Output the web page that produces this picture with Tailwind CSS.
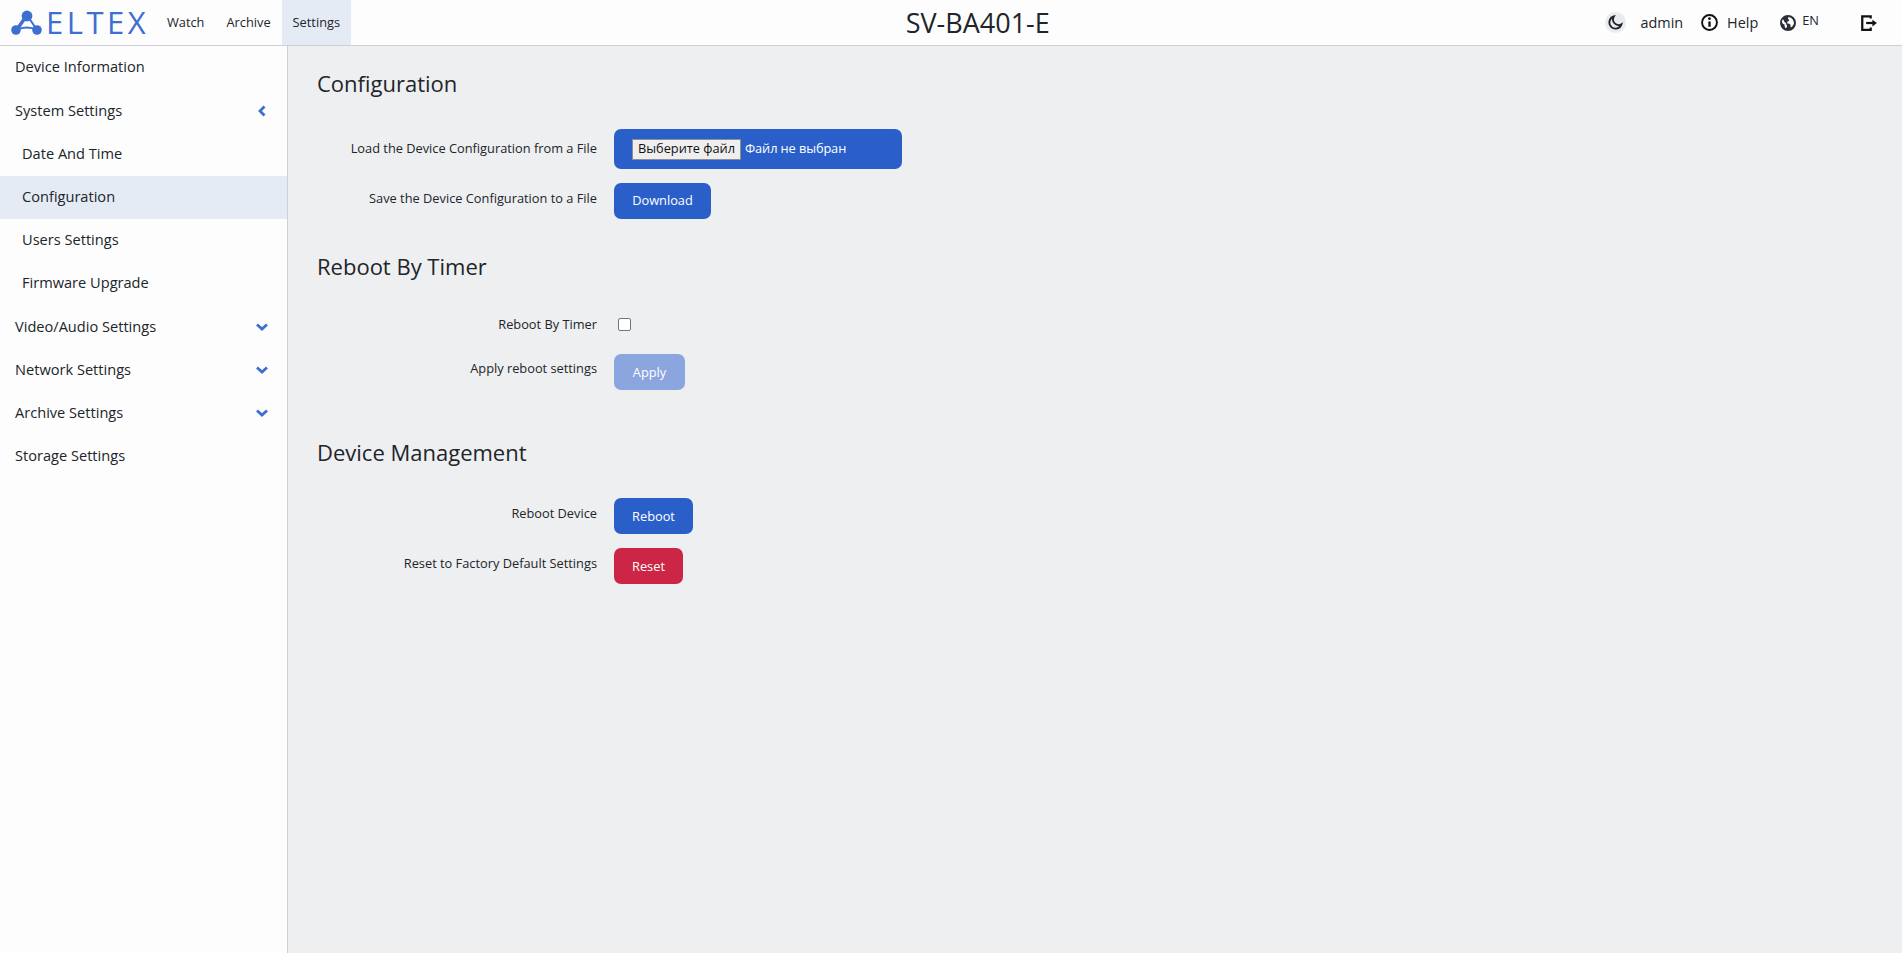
<!DOCTYPE html>
<html lang="en">
<head>
    <meta charset="UTF-8">
    <title>SV-BA401-E</title>
    <script src="https://cdn.jsdelivr.net/npm/@tailwindcss/browser@4"></script>
</head>
<body class="h-[953px] overflow-hidden bg-[#eeeff1] font-['Open_Sans',sans-serif] text-[#212529]">
    <!-- Top bar -->
    <header class="flex h-[46px] items-stretch border-b border-[#ced0d6] bg-[#fdfdfd]">
        <a class="ml-[10px] flex w-[146px] items-center">
            <svg class="h-[26px] w-[33px] shrink-0" viewBox="0 0 33 26" fill="none">
                <path d="M15 8 L6 20 M19 8 L27 20 M6 20 Q17 15 27 20" stroke="#3d6fd0" stroke-width="2"/>
                <path d="M15 8 L8 18" stroke="#3d6fd0" stroke-width="3.4"/>
                <circle cx="17" cy="6" r="5.4" fill="#3d6fd0"/>
                <circle cx="6" cy="20" r="4.8" fill="#3d6fd0"/>
                <circle cx="27" cy="20" r="4.8" fill="#3d6fd0"/>
            </svg>
            <span class="ml-[3px] text-[31px] leading-none tracking-[3.5px] text-[#3d6fd0]">ELTEX</span>
        </a>
        <nav class="flex text-[12.8px]">
            <a class="flex items-center px-[11px]">Watch</a>
            <a class="flex items-center px-[11px]">Archive</a>
            <a class="flex items-center bg-[#e5ebf5] px-[11px]">Settings</a>
        </nav>
        <div class="flex flex-1 items-center justify-center">
            <span class="text-[27px] leading-none">SV-BA401-E</span>
        </div>
        <div class="flex items-center pr-[24px] text-[14px]">
            <span class="flex h-[21px] w-[21px] items-center justify-center rounded-full bg-[#e9ebee]">
                <svg class="h-[15px] w-[15px]" viewBox="0 0 16 16" fill="none" stroke="#212529" stroke-width="2"><path d="M6.2 1.6a6.6 6.6 0 1 0 8.2 8.2 A6 6 0 0 1 6.2 1.6z"/></svg>
            </span>
            <span class="ml-[15px] text-[14.4px]">admin</span>
            <svg class="ml-[18px] h-[17px] w-[17px]" viewBox="0 0 16 16" fill="none"><circle cx="8" cy="8" r="7" stroke="#111" stroke-width="1.8"/><path d="M8 7v5" stroke="#111" stroke-width="2.2"/><circle cx="8" cy="4.4" r="1.3" fill="#111"/></svg>
            <span class="ml-[9px] text-[14.4px]">Help</span>
            <svg class="ml-[22px] h-[16px] w-[16px]" viewBox="0 0 16 16" fill="#2b3038"><path d="M8 0a8 8 0 1 0 0 16A8 8 0 0 0 8 0zM2.6 4.3 4 5.5l.3 1.6 1.7 1 .2 1.4.9 1-.4 2-1.2.8-.9-2-.1-1.7-1.7-.9-.9-1.6.7-2.8zM14 8.5l-1.3 2.6-1.5 1.2-.8-.3.3-2-1.8-1.4-1.2.2-.6-1.3.8-1.3 1.1-.2.2-1.3-1-.4-.2-1.5.9-.7 2.4.8 1.6 1.8.6 1.3z"/></svg>
            <span class="mb-[4px] ml-[6px] text-[12.8px]">EN</span>
            <svg class="ml-[41px] h-[18px] w-[18px]" viewBox="0 0 16 16" fill="none" stroke="#111" stroke-width="2"><path d="M9.5 4V2H2v12h7.5v-2"/><path d="M5.5 8h6" /><path d="M11 5l4 3-4 3z" fill="#111" stroke="none"/></svg>
        </div>
    </header>

    <div class="flex h-[907px]">
        <!-- Sidebar -->
        <aside class="w-[288px] shrink-0 border-r border-[#ced0d6] bg-[#fdfdfd] text-[14.6px]">
            <a class="flex h-[43.2px] items-center justify-between pb-[0.4px] pl-[15px] pr-[19px]">Device Information</a>
            <a class="flex h-[43.2px] items-center justify-between pb-[0.4px] pl-[15px] pr-[19px]">System Settings
                <svg class="h-[12px] w-[12px]" viewBox="0 0 12 12" fill="none" stroke="#3d6fd0" stroke-width="2.8"><path d="M8.5 1.5 4 6l4.5 4.5"/></svg>
            </a>
            <a class="flex h-[43.2px] items-center pb-[0.4px] pl-[22px]">Date And Time</a>
            <a class="flex h-[43.2px] items-center bg-[#e5ebf5] pb-[0.4px] pl-[22px]">Configuration</a>
            <a class="flex h-[43.2px] items-center pb-[0.4px] pl-[22px]">Users Settings</a>
            <a class="flex h-[43.2px] items-center pb-[0.4px] pl-[22px]">Firmware Upgrade</a>
            <a class="flex h-[43.2px] items-center justify-between pb-[0.4px] pl-[15px] pr-[19px]">Video/Audio Settings
                <svg class="h-[12px] w-[12px]" viewBox="0 0 12 12" fill="none" stroke="#3d6fd0" stroke-width="2.8"><path d="M1 3.5 6 8l5-4.5"/></svg>
            </a>
            <a class="flex h-[43.2px] items-center justify-between pb-[0.4px] pl-[15px] pr-[19px]">Network Settings
                <svg class="h-[12px] w-[12px]" viewBox="0 0 12 12" fill="none" stroke="#3d6fd0" stroke-width="2.8"><path d="M1 3.5 6 8l5-4.5"/></svg>
            </a>
            <a class="flex h-[43.2px] items-center justify-between pb-[0.4px] pl-[15px] pr-[19px]">Archive Settings
                <svg class="h-[12px] w-[12px]" viewBox="0 0 12 12" fill="none" stroke="#3d6fd0" stroke-width="2.8"><path d="M1 3.5 6 8l5-4.5"/></svg>
            </a>
            <a class="flex h-[43.2px] items-center justify-between pb-[0.4px] pl-[15px] pr-[19px]">Storage Settings</a>
        </aside>

        <!-- Main -->
        <main class="flex-1 pl-[29px] text-[12.8px]">
            <h2 class="mt-[22px] text-[22px] leading-[30px]">Configuration</h2>

            <div class="mt-[31px] flex items-center">
                <label class="w-[280px] pb-[1px] text-right">Load the Device Configuration from a File</label>
                <div class="ml-[17px] flex h-[40px] w-[288px] items-center rounded-[7px] bg-[#2a5fc9] pl-[18px] text-white">
                    <span class="flex h-[21px] w-[109px] items-center justify-center whitespace-nowrap border border-[#8f8f8f] bg-[#efefef] text-[#111]">Выберите файл</span>
                    <span class="ml-[4px] tracking-[-0.1px]">Файл не выбран</span>
                </div>
            </div>
            <div class="mt-[14px] flex">
                <label class="mt-[6px] w-[280px] text-right">Save the Device Configuration to a File</label>
                <button class="ml-[17px] h-[36px] w-[97px] rounded-[7px] bg-[#2a5fc9] font-medium text-white">Download</button>
            </div>

            <h2 class="mt-[32px] text-[22px] leading-[30px]">Reboot By Timer</h2>

            <div class="mt-[34px] flex items-center">
                <label class="w-[280px] text-right">Reboot By Timer</label>
                <input type="checkbox" class="ml-[21px] h-[13px] w-[13px] appearance-none rounded-[2px] border border-[#767676] bg-white">
            </div>
            <div class="mt-[20px] flex">
                <label class="mt-[5px] w-[280px] text-right">Apply reboot settings</label>
                <button class="ml-[17px] h-[36px] w-[71px] rounded-[7px] bg-[#8ba6de] font-medium text-white">Apply</button>
            </div>

            <h2 class="mt-[47px] text-[22px] leading-[30px]">Device Management</h2>

            <div class="mt-[31px] flex">
                <label class="mt-[6px] w-[280px] text-right">Reboot Device</label>
                <button class="ml-[17px] h-[36px] w-[79px] rounded-[7px] bg-[#2a5fc9] font-medium text-white">Reboot</button>
            </div>
            <div class="mt-[14px] flex">
                <label class="mt-[6px] w-[280px] text-right">Reset to Factory Default Settings</label>
                <button class="ml-[17px] h-[36px] w-[69px] rounded-[7px] bg-[#cd2545] font-medium text-white">Reset</button>
            </div>
        </main>
    </div>
</body>
</html>
